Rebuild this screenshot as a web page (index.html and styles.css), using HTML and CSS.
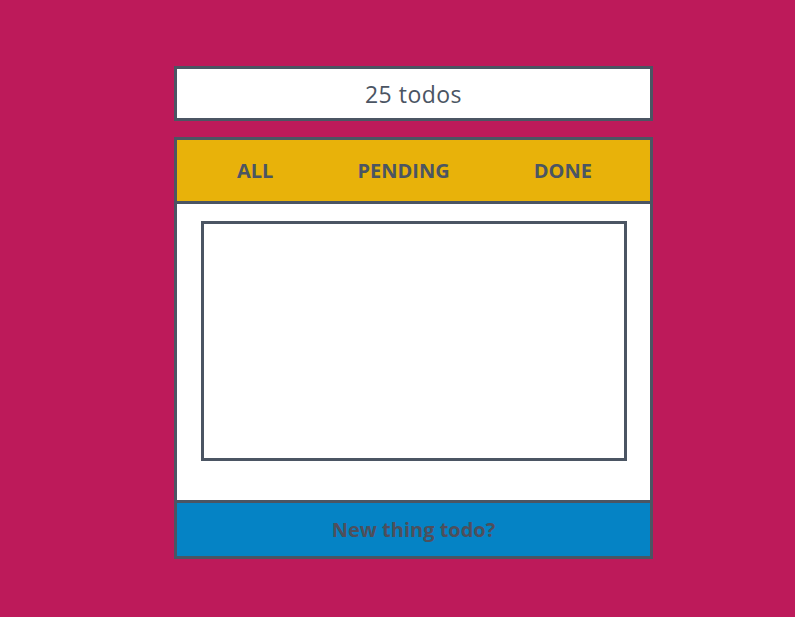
FILE: index.html
```html
<!DOCTYPE html>
<html lang="en">
<head>
    <meta charset="UTF-8">
    <meta name="viewport" content="width=device-width, initial-scale=1.0">
    <title>Todos</title>
    <link rel="stylesheet" href="styles.css">
</head>
<body>
    <div class="app">
        <div class="counter">25 todos</div>
        <div class="board">
            <nav class="tabs">
                <span class="tab">ALL</span>
                <span class="tab">PENDING</span>
                <span class="tab">DONE</span>
            </nav>
            <div class="list-wrap">
                <ul class="todo-list"></ul>
            </div>
            <input class="new-todo" type="text" placeholder="New thing todo?">
        </div>
    </div>
</body>
</html>
```

FILE: styles.css
```css
body {
    margin: 0;
    height: 100vh;
    background: #bd1a5a;
    font-family: "Comic Sans MS", "Open Sans", sans-serif;
    color: #4b5563;
}

.app {
    width: 479px;
    padding: 66px 0 0 174px;
    display: flex;
    flex-direction: column;
    gap: 16px;
}

.counter {
    height: 49px;
    border: 3px solid #4b5563;
    background: #fff;
    display: flex;
    justify-content: center;
    align-items: center;
    font-size: 23px;
    letter-spacing: 0.5px;
}

.board {
    border: 3px solid #4b5563;
    background: #fff;
    display: flex;
    flex-direction: column;
}

.tabs {
    height: 61px;
    background: #e8b20a;
    border-bottom: 3px solid #4b5563;
    display: flex;
    justify-content: space-between;
    align-items: center;
    padding: 0 58px 0 60px;
}

.tab {
    font-size: 20px;
    font-weight: 700;
    cursor: pointer;
}

.list-wrap {
    padding: 17px 23px 39px 24px;
}

.todo-list {
    margin: 0;
    padding: 0;
    list-style: none;
    height: 234px;
    border: 3px solid #4b5563;
}

.new-todo {
    box-sizing: border-box;
    height: 56px;
    margin: 0;
    padding: 0;
    border: none;
    border-top: 3px solid #4b5563;
    background: #0583c5;
    font-family: inherit;
    font-size: 20px;
    font-weight: 700;
    text-align: center;
    color: #4b5563;
    outline: none;
}

.new-todo::placeholder {
    color: #4e4f5c;
}
```
